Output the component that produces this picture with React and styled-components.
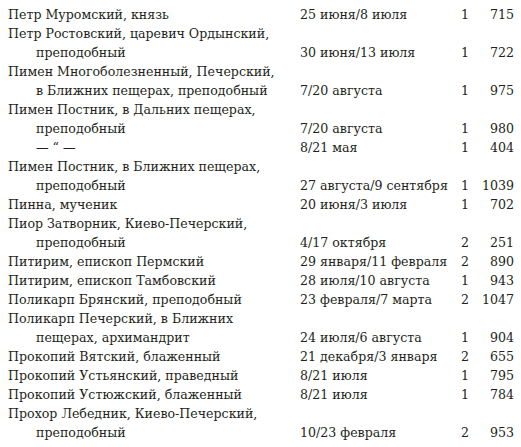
import React from "react";
import styled, { createGlobalStyle } from "styled-components";

const Global = createGlobalStyle`
  html, body { margin: 0; padding: 0; background: #fff; }
  body { font-family: "DejaVu Serif", "Liberation Serif", serif; color: #231f20; }
`;

const Table = styled.div`
  display: grid;
  grid-template-columns: 292px 150px 30px 34px;
  padding: 5px 0 0 8px;
  font-size: 12.6px;
  line-height: 19px;
`;

const Name = styled.div`
  display: flex;
  flex-direction: column;
`;

const Line = styled.span`
  padding-left: ${(p) => (p.$indent ? "28px" : "0")};
  white-space: nowrap;
`;

const Cell = styled.div`
  align-self: end;
  white-space: nowrap;
  text-align: ${(p) => p.$align || "left"};
`;

const rows = [
  [["Петр Муромский, князь"], "25 июня/8 июля", "1", "715"],
  [["Петр Ростовский, царевич Ордынский,", "преподобный"], "30 июня/13 июля", "1", "722"],
  [["Пимен Многоболезненный, Печерский,", "в Ближних пещерах, преподобный"], "7/20 августа", "1", "975"],
  [["Пимен Постник, в Дальних пещерах,", "преподобный"], "7/20 августа", "1", "980"],
  [["— “ —"], "8/21 мая", "1", "404", true],
  [["Пимен Постник, в Ближних пещерах,", "преподобный"], "27 августа/9 сентября", "1", "1039"],
  [["Пинна, мученик"], "20 июня/3 июля", "1", "702"],
  [["Пиор Затворник, Киево-Печерский,", "преподобный"], "4/17 октября", "2", "251"],
  [["Питирим, епископ Пермский"], "29 января/11 февраля", "2", "890"],
  [["Питирим, епископ Тамбовский"], "28 июля/10 августа", "1", "943"],
  [["Поликарп Брянский, преподобный"], "23 февраля/7 марта", "2", "1047"],
  [["Поликарп Печерский, в Ближних", "пещерах, архимандрит"], "24 июля/6 августа", "1", "904"],
  [["Прокопий Вятский, блаженный"], "21 декабря/3 января", "2", "655"],
  [["Прокопий Устьянский, праведный"], "8/21 июля", "1", "795"],
  [["Прокопий Устюжский, блаженный"], "8/21 июля", "1", "784"],
  [["Прохор Лебедник, Киево-Печерский,", "преподобный"], "10/23 февраля", "2", "953"],
];

export default function App() {
  return (
    <>
      <Global />
      <Table>
        {rows.map(([lines, date, vol, page, ditto], i) => (
          <React.Fragment key={i}>
            <Name>
              {lines.map((l, j) => (
                <Line key={j} $indent={j > 0 || ditto}>{l}</Line>
              ))}
            </Name>
            <Cell>{date}</Cell>
            <Cell $align="center">{vol}</Cell>
            <Cell $align="right">{page}</Cell>
          </React.Fragment>
        ))}
      </Table>
    </>
  );
}
